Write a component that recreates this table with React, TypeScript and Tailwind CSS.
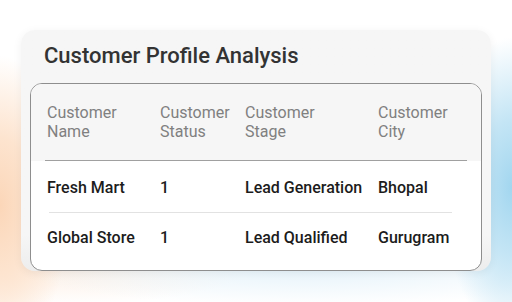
const HEADERS = [
  ['Customer', 'Name'],
  ['Customer', 'Status'],
  ['Customer', 'Stage'],
  ['Customer', 'City'],
]

const ROWS = [
  { name: 'Fresh Mart', status: '1', stage: 'Lead Generation', city: 'Bhopal' },
  { name: 'Global Store', status: '1', stage: 'Lead Qualified', city: 'Gurugram' },
]

const COLS = 'grid grid-cols-[113px_85px_133px_1fr] pl-[16px]'

export default function App() {
  return (
    <div className="h-[302px] w-[512px] overflow-hidden bg-white bg-[radial-gradient(ellipse_70px_150px_at_0%_68%,#fbd6b8_0%,#fde4cf_45%,transparent_100%),radial-gradient(ellipse_70px_150px_at_100%_62%,#a2d6ef_0%,#c4e5f5_45%,transparent_100%),radial-gradient(ellipse_300px_40px_at_60%_88%,#e4f2fa_0%,transparent_100%),radial-gradient(ellipse_200px_40px_at_10%_88%,#fdeee2_0%,transparent_100%)] pl-[21px] pt-[30px] font-['Roboto','Liberation_Sans',sans-serif]">
      <div className="flex h-[241px] w-[470px] flex-col rounded-[14px] bg-gradient-to-b from-[#f6f6f6] from-85% to-[#ededed] shadow-[0_2px_10px_rgba(0,0,0,0.06)]">
        <h1 className="pl-[23px] pt-[12px] text-[22px] font-medium leading-[28px] text-[#333333]">
          Customer Profile Analysis
        </h1>
        <div className="mx-[9px] mt-[13px] flex-1 overflow-hidden rounded-[12px] border border-[#8e8e8e] bg-white">
          <div className="bg-[#f6f6f6]">
            <div className={`${COLS} h-[76px] items-center text-[16px] leading-[19px] text-[#808080]`}>
              {HEADERS.map(([a, b]) => (
                <div key={b}>
                  <div>{a}</div>
                  <div>{b}</div>
                </div>
              ))}
            </div>
            <div className="mx-[14px] h-px bg-[#a0a0a0]" />
          </div>
          <div className="pt-[2px]">
            {ROWS.map((r, i) => (
              <div key={r.name}>
                {i > 0 && <div className="ml-[18px] mr-[29px] h-px bg-[#e2e2e2]" />}
                <div className={`${COLS} h-[49px] items-center pt-[1px] text-[16px] font-medium text-[#1c1c1c]`}>
                  <div>{r.name}</div>
                  <div>{r.status}</div>
                  <div>{r.stage}</div>
                  <div>{r.city}</div>
                </div>
              </div>
            ))}
          </div>
        </div>
      </div>
    </div>
  )
}
